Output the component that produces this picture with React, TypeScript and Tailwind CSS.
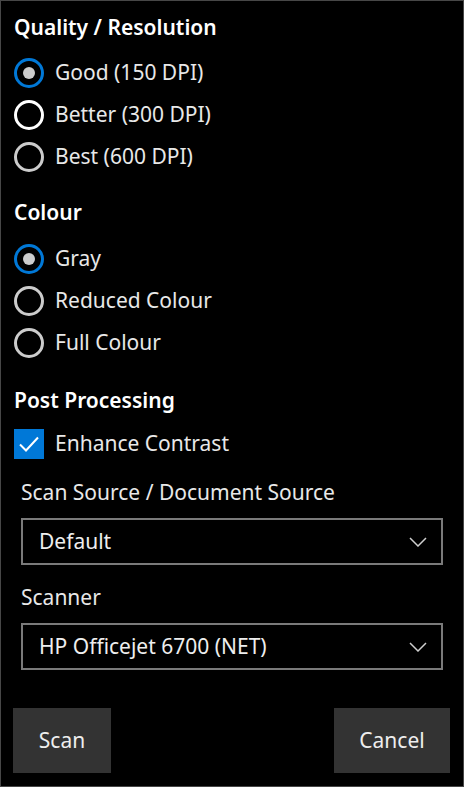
import { useState } from 'react'

const font = { fontFamily: '"Noto Sans", "Open Sans", sans-serif' }

function Radio({ label, checked, bright }: { label: string; checked?: boolean; bright?: boolean }) {
  return (
    <div className="flex h-[42px] items-center">
      <span
        className={`flex h-[30px] w-[30px] shrink-0 items-center justify-center rounded-full border-[3px] ${
          checked ? 'border-[#0078d7]' : bright ? 'border-white' : 'border-[#cccccc]'
        }`}
      >
        {checked && <span className="h-[12px] w-[12px] rounded-full bg-[#cccccc]" />}
      </span>
      <span className="ml-[11px] text-[21px] text-[#e8e8e8]">{label}</span>
    </div>
  )
}

function Dropdown({ value }: { value: string }) {
  return (
    <div className="mx-[7px] flex h-[47px] items-center justify-between border-2 border-[#7a7a7a] pl-[16px] pr-[14px]">
      <span className="text-[21px] text-[#eeeeee]">{value}</span>
      <svg width="18" height="10" viewBox="0 0 18 10" fill="none">
        <path d="M1 1l8 8 8-8" stroke="#cfcfcf" strokeWidth="1.5" />
      </svg>
    </div>
  )
}

export default function App() {
  const [quality] = useState('good')
  const [colour] = useState('gray')

  return (
    <div style={font} className="flex h-[787px] w-[464px] flex-col border border-[#474747] bg-black px-[13px] pt-[11px] text-white">
      <h2 className="h-[30px] text-[21px] font-semibold leading-[30px]">Quality / Resolution</h2>
      <div className="mt-[10px]">
        <Radio label="Good (150 DPI)" checked={quality === 'good'} />
        <Radio label="Better (300 DPI)" checked={quality === 'better'} bright />
        <Radio label="Best (600 DPI)" checked={quality === 'best'} />
      </div>

      <h2 className="mt-[19px] h-[30px] text-[21px] font-semibold leading-[30px]">Colour</h2>
      <div className="mt-[11px]">
        <Radio label="Gray" checked={colour === 'gray'} />
        <Radio label="Reduced Colour" checked={colour === 'reduced'} />
        <Radio label="Full Colour" checked={colour === 'full'} />
      </div>

      <h2 className="mt-[21px] h-[30px] text-[21px] font-semibold leading-[30px]">Post Processing</h2>
      <div className="mt-[8px] flex h-[42px] items-center">
        <span className="flex h-[30px] w-[30px] items-center justify-center bg-[#0078d7]">
          <svg width="22" height="18" viewBox="0 0 22 18" fill="none">
            <path d="M2 9.5l6 6L20 2.5" stroke="white" strokeWidth="2" />
          </svg>
        </span>
        <span className="ml-[11px] text-[21px] text-[#e8e8e8]">Enhance Contrast</span>
      </div>

      <div className="mt-[12px] h-[30px] pl-[7px] text-[21px] leading-[30px] text-[#e8e8e8]">Scan Source / Document Source</div>
      <div className="mt-[11px]">
        <Dropdown value="Default" />
      </div>

      <div className="mt-[17px] h-[30px] pl-[7px] text-[21px] leading-[30px] text-[#e8e8e8]">Scanner</div>
      <div className="mt-[11px]">
        <Dropdown value="HP Officejet 6700 (NET)" />
      </div>

      <div className="mt-[38px] flex justify-between">
        <button className="-ml-px h-[65px] w-[98px] bg-[#333333] text-[21px] text-[#eeeeee]">Scan</button>
        <button className="h-[65px] w-[116px] bg-[#333333] text-[21px] text-[#eeeeee]">Cancel</button>
      </div>
    </div>
  )
}
